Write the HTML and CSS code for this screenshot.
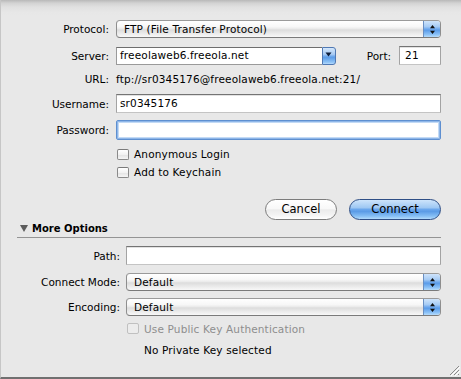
FILE: index.html
```html
<!DOCTYPE html>
<html>
<head>
<meta charset="utf-8">
<link rel="stylesheet" href="styles.css">
</head>
<body>
<div class="sheet">
  <div class="row r-protocol top">
    <span class="lbl">Protocol:</span>
    <div class="popup">
      <span class="popup-text">FTP (File Transfer Protocol)</span>
      <span class="stepper"><svg width="7" height="11" viewBox="0 0 7 11"><path d="M3.5 1 L6 4.2 L1 4.2 Z M1 6.8 L6 6.8 L3.5 10 Z" fill="#111"/></svg></span>
    </div>
  </div>
  <div class="row r-server top">
    <span class="lbl">Server:</span>
    <div class="server-line">
      <div class="combo">
        <span class="combo-text">freeolaweb6.freeola.net</span>
        <span class="combo-btn"><svg width="7" height="5" viewBox="0 0 7 5"><path d="M0.5 0.5 L6.5 0.5 L3.5 4.5 Z" fill="#0d1d3a"/></svg></span>
      </div>
      <span class="port-lbl">Port:</span>
      <div class="field port">21</div>
    </div>
  </div>
  <div class="row r-url top">
    <span class="lbl">URL:</span>
    <span class="val">ftp://sr0345176@freeolaweb6.freeola.net:21/</span>
  </div>
  <div class="row r-user top">
    <span class="lbl">Username:</span>
    <div class="field">sr0345176</div>
  </div>
  <div class="row r-pass top">
    <span class="lbl">Password:</span>
    <div class="field focused"></div>
  </div>
  <div class="row r-anon top">
    <span></span>
    <div class="check"><span class="box"></span><span>Anonymous Login</span></div>
  </div>
  <div class="row r-key top">
    <span></span>
    <div class="check"><span class="box"></span><span>Add to Keychain</span></div>
  </div>
  <div class="buttons">
    <div class="btn cancel">Cancel</div>
    <div class="btn connect">Connect</div>
  </div>
  <div class="more">
    <svg width="8" height="7" viewBox="0 0 8 7"><path d="M0 0 L8 0 L4 7 Z" fill="#5c5c5c"/></svg>
    <span>More Options</span>
  </div>
  <div class="sep"></div>
  <div class="row r-path bottom">
    <span class="lbl">Path:</span>
    <div class="field"></div>
  </div>
  <div class="row r-mode bottom">
    <span class="lbl">Connect Mode:</span>
    <div class="popup">
      <span class="popup-text">Default</span>
      <span class="stepper"><svg width="7" height="11" viewBox="0 0 7 11"><path d="M3.5 1 L6 4.2 L1 4.2 Z M1 6.8 L6 6.8 L3.5 10 Z" fill="#111"/></svg></span>
    </div>
  </div>
  <div class="row r-enc bottom">
    <span class="lbl">Encoding:</span>
    <div class="popup">
      <span class="popup-text">Default</span>
      <span class="stepper"><svg width="7" height="11" viewBox="0 0 7 11"><path d="M3.5 1 L6 4.2 L1 4.2 Z M1 6.8 L6 6.8 L3.5 10 Z" fill="#111"/></svg></span>
    </div>
  </div>
  <div class="row r-pk bottom">
    <span></span>
    <div class="check disabled"><span class="box"></span><span>Use Public Key Authentication</span></div>
  </div>
  <div class="row r-nopk bottom">
    <span></span>
    <span class="nopk">No Private Key selected</span>
  </div>
  <svg class="grip" width="12" height="12" viewBox="0 0 12 12">
    <path d="M11 2 L2 11 M11 6 L6 11 M11 10 L10 11" stroke="#8a8a8a" stroke-width="1"/>
    <path d="M12 3 L3 12 M12 7 L7 12" stroke="#ffffff" stroke-width="1"/>
  </svg>
</div>
</body>
</html>
```
FILE: styles.css
```css
* { box-sizing: border-box; }
html, body { margin: 0; padding: 0; }
body {
  font-family: "DejaVu Sans", "Liberation Sans", sans-serif;
  font-size: 10.5px;
  color: #000;
  background: #e8e8e8;
}
.sheet {
  position: relative;
  width: 461px;
  height: 379px;
  background: linear-gradient(#b8b8b8 0, #d2d2d2 3px, #e0e0e0 7px, #e7e7e7 12px, #e8e8e8 16px);
  border-left: 1px solid #c6c6c6;
  border-bottom: 2px solid #707070;
  padding-right: 20px;
  display: flex;
  flex-direction: column;
  overflow: hidden;
}
.row {
  display: grid;
  align-items: center;
}
.row.top { grid-template-columns: 108px 325px; column-gap: 7px; }
.row.bottom { grid-template-columns: 119px 315px; column-gap: 6px; }
.lbl { text-align: right; white-space: nowrap; }
.val, .popup-text, .combo-text, .field, .check, .nopk { letter-spacing: 0.15px; }

.r-protocol { margin-top: 20px; height: 18px; }
.r-server { margin-top: 8px; height: 19px; }
.r-url { margin-top: 7px; height: 14px; }
.r-user { margin-top: 8px; height: 19px; }
.r-pass { margin-top: 7px; height: 20px; }
.r-anon { margin-top: 7px; height: 14px; }
.r-key { margin-top: 4px; height: 14px; }
.r-path { margin-top: 8px; height: 19px; }
.r-mode { margin-top: 8px; height: 18px; }
.r-enc { margin-top: 7px; height: 18px; }
.r-pk { margin-top: 6px; height: 13px; }
.r-nopk { margin-top: 8px; height: 14px; }

.popup {
  height: 18px;
  border: 1px solid #8e8e8e;
  border-top-color: #9a9a9a;
  border-bottom-color: #7a7a7a;
  border-radius: 4px;
  background: linear-gradient(#ffffff 0, #f7f7f7 35%, #e9e9e9 50%, #dcdcdc 55%, #ececec 80%, #f8f8f8 100%);
  display: flex;
  align-items: center;
  overflow: hidden;
}
.popup-text { flex: 1; padding-left: 7px; white-space: nowrap; }
.stepper {
  width: 17px;
  height: 100%;
  border-left: 1px solid #6a8fc2;
  background: linear-gradient(#cfe4fb 0, #a6cbf4 35%, #6fa9ee 50%, #5b9ce9 58%, #8cc2f7 85%, #b7dcfb 100%);
  display: flex;
  align-items: center;
  justify-content: center;
}

.server-line { display: flex; align-items: center; height: 19px; }
.combo {
  width: 220px;
  height: 18px;
  display: flex;
  align-items: stretch;
  margin-top: 1px;
}
.combo-text {
  flex: 1;
  background: #fff;
  border: 1px solid #9a9a9a;
  border-top-color: #6e6e6e;
  border-right: none;
  padding-left: 3px;
  line-height: 15px;
  white-space: nowrap;
  overflow: hidden;
}
.combo-btn {
  width: 14px;
  border: 1px solid #4f78b3;
  border-radius: 0 3px 3px 0;
  background: linear-gradient(#d4e7fb 0, #a5c9f3 40%, #6ea8ec 52%, #5d9de8 60%, #91c5f7 90%, #b8dbfb 100%);
  display: flex;
  justify-content: center;
  padding-top: 4px;
}
.port-lbl { margin-left: 31px; }
.field {
  height: 19px;
  background: #fff;
  border: 1px solid #a3a3a3;
  border-top-color: #747474;
  border-bottom-color: #c4c4c4;
  box-shadow: inset 0 1px 0 #e2e2e2;
  padding-left: 3px;
  line-height: 17px;
  white-space: nowrap;
}
.field.port { width: 42px; margin-left: 8px; padding-left: 5px; }
.field.focused {
  height: 20px;
  border: 1px solid #5e8fd0;
  border-radius: 2px;
  box-shadow: inset 0 0 0 1px #8eb6e8, inset 0 0 0 2px #c3daf5;
}

.check { display: flex; align-items: center; gap: 5px; white-space: nowrap; }
.check .box {
  width: 12px;
  height: 11px;
  border: 1px solid #8a8a8a;
  border-top-color: #7a7a7a;
  border-radius: 2px;
  background: linear-gradient(#ffffff, #f2f2f2 50%, #e4e4e4 55%, #f5f5f5);
  margin-left: 1px;
}
.check.disabled { color: #8e8e8e; }
.check.disabled .box { border-color: #c0c0c0; background: #ececec; }

.buttons {
  margin-top: 19px;
  display: flex;
  justify-content: flex-end;
  gap: 12px;
  height: 22px;
  align-items: center;
}
.btn {
  height: 21px;
  border-radius: 11px;
  display: flex;
  align-items: center;
  justify-content: center;
  font-size: 11.5px;
}
.btn.cancel {
  width: 72px;
  border: 1px solid #7c7c7c;
  background: linear-gradient(#ffffff 0, #f8f8f8 45%, #ebebeb 52%, #f4f4f4 80%, #ffffff 100%);
}
.btn.connect {
  width: 92px;
  border: 1px solid #2f4f86;
  background: linear-gradient(#cde4fb 0, #9fc8f3 40%, #6aa6ec 50%, #5b9be6 60%, #86bff5 85%, #b2dafb 100%);
}

.more {
  margin-top: 1px;
  height: 14px;
  display: flex;
  align-items: center;
  padding-left: 19px;
  gap: 4px;
  font-weight: bold;
  font-size: 10px;
}
.sep {
  margin-top: 2px;
  margin-left: 16px;
  height: 1px;
  background: #949494;
}
.nopk { padding-left: 18px; white-space: nowrap; }

.grip { position: absolute; right: 1px; bottom: 1px; }
```
